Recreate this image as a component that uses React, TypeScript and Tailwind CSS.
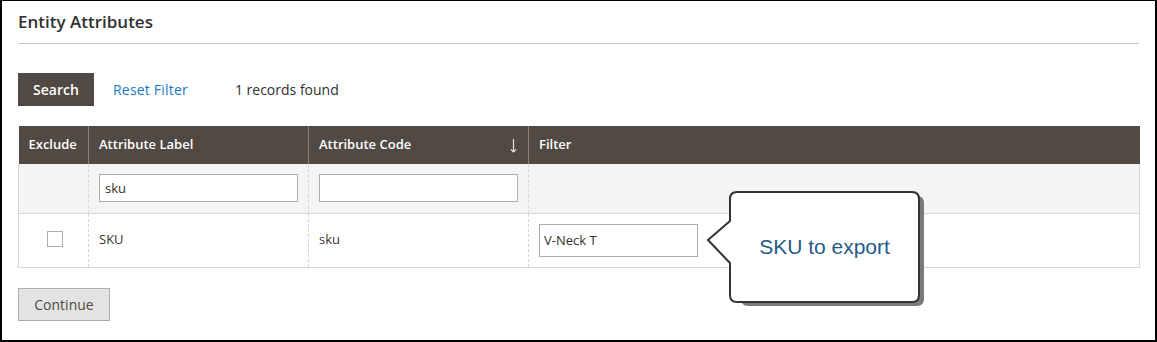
import React from 'react';

const font = { fontFamily: '"Open Sans", "Liberation Sans", sans-serif' };

const App: React.FC = () => {
  return (
    <div
      className="relative w-[1157px] h-[342px] bg-white border-t border-l-2 border-r-2 border-b-2 border-black text-[#303030] overflow-hidden"
      style={font}
    >
      <div className="mx-[16px]">
        {/* Title */}
        <div className="h-[43px] border-b border-[#ccc5bf] pt-[9px]">
          <h2 className="text-[17px] leading-[24px] font-semibold text-[#303030]">Entity Attributes</h2>
        </div>

        {/* Toolbar */}
        <div className="mt-[29px] flex items-center h-[33px]">
          <button className="h-[33px] w-[76px] bg-[#514943] text-white text-[14px] font-semibold">
            Search
          </button>
          <span className="ml-[19px] text-[14px] tracking-[0.2px] text-[#1979c3]">Reset Filter</span>
          <span className="ml-[47px] text-[14px] text-[#303030]">1 records found</span>
        </div>

        {/* Grid */}
        <table className="mt-[20px] w-[1122px] border-collapse table-fixed text-[13px]">
          <colgroup>
            <col className="w-[70px]" />
            <col className="w-[220px]" />
            <col className="w-[220px]" />
            <col />
          </colgroup>
          <thead>
            <tr className="h-[38px] bg-[#514943] text-white font-semibold text-left">
              <th className="px-[10px] font-semibold border-r border-[#8a817b]">Exclude</th>
              <th className="px-[10px] font-semibold border-r border-[#8a817b]">Attribute Label</th>
              <th className="px-[10px] font-semibold border-r border-[#8a817b]">
                <div className="flex items-center justify-between">
                  <span>Attribute Code</span>
                  <svg width="7" height="14" viewBox="0 0 7 14" className="mr-[1px] mt-[2px]">
                    <path d="M3.5 0 L3.5 13" stroke="#e9e2d6" strokeWidth="1.2" />
                    <path d="M1 10.5 L3.5 13 L6 10.5" stroke="#e9e2d6" strokeWidth="1.2" fill="none" />
                  </svg>
                </div>
              </th>
              <th className="px-[10px] font-semibold">Filter</th>
            </tr>
          </thead>
          <tbody>
            <tr className="h-[49px] bg-[#f4f4f4] border-x border-b border-[#d6d6d6]">
              <td className="border-r border-dashed border-[#d6d6d6]" />
              <td className="px-[10px] border-r border-dashed border-[#d6d6d6]">
                <input
                  readOnly
                  value="sku"
                  className="w-full h-[28px] bg-white border border-[#adadad] px-[5px] text-[13px] text-[#303030] outline-none"
                  style={font}
                />
              </td>
              <td className="px-[10px] border-r border-dashed border-[#d6d6d6]">
                <input
                  readOnly
                  value=""
                  className="w-full h-[28px] bg-white border border-[#adadad] px-[5px] text-[13px] outline-none"
                  style={font}
                />
              </td>
              <td />
            </tr>
            <tr className="h-[54px] bg-white border-x border-b border-[#d6d6d6]">
              <td className="border-r border-dashed border-[#d6d6d6]">
                <div className="flex justify-center">
                  <div className="w-[16px] h-[16px] ml-[2px] -mt-[3px] border border-[#adadad] bg-white" />
                </div>
              </td>
              <td className="px-[10px] text-[#41362f] border-r border-dashed border-[#d6d6d6]">SKU</td>
              <td className="px-[10px] text-[#41362f] border-r border-dashed border-[#d6d6d6]">sku</td>
              <td className="px-[10px]">
                <input
                  readOnly
                  value="V-Neck T"
                  className="w-[159px] h-[33px] bg-white border border-[#adadad] px-[4px] text-[13px] text-[#303030] outline-none"
                  style={font}
                />
              </td>
            </tr>
          </tbody>
        </table>

        <button className="mt-[20px] h-[33px] w-[92px] bg-[#e3e3e3] border border-[#adadad] text-[14px] text-[#514943]">
          Continue
        </button>
      </div>

      {/* Callout */}
      <div className="absolute left-[703px] top-[188px] w-[224px] h-[120px]">
        <svg width="224" height="120" viewBox="0 0 224 120" className="absolute inset-0">
          <path
            d="M32 10 Q32 3 39 3 L208 3 Q215 3 215 10 L215 106 Q215 113 208 113 L39 113 Q32 113 32 106 L32 76 L10 55 L32 34 Z"
            transform="translate(4 4)"
            fill="#7a7a7a"
          />
          <path
            d="M25 10 Q25 3 32 3 L207 3 Q214 3 214 10 L214 106 Q214 113 207 113 L32 113 Q25 113 25 106 L25 74 L3 51 L25 32 Z"
            fill="#ffffff"
            stroke="#333333"
            strokeWidth="2"
            strokeLinejoin="round"
          />
        </svg>
        <div className="absolute left-[25px] top-[3px] w-[189px] h-[110px] flex items-center justify-center">
          <span
            className="text-[21px] text-[#1f5b88]"
            style={{ fontFamily: '"Liberation Sans", Arial, sans-serif' }}
          >
            SKU to export
          </span>
        </div>
      </div>
    </div>
  );
};

export default App;
